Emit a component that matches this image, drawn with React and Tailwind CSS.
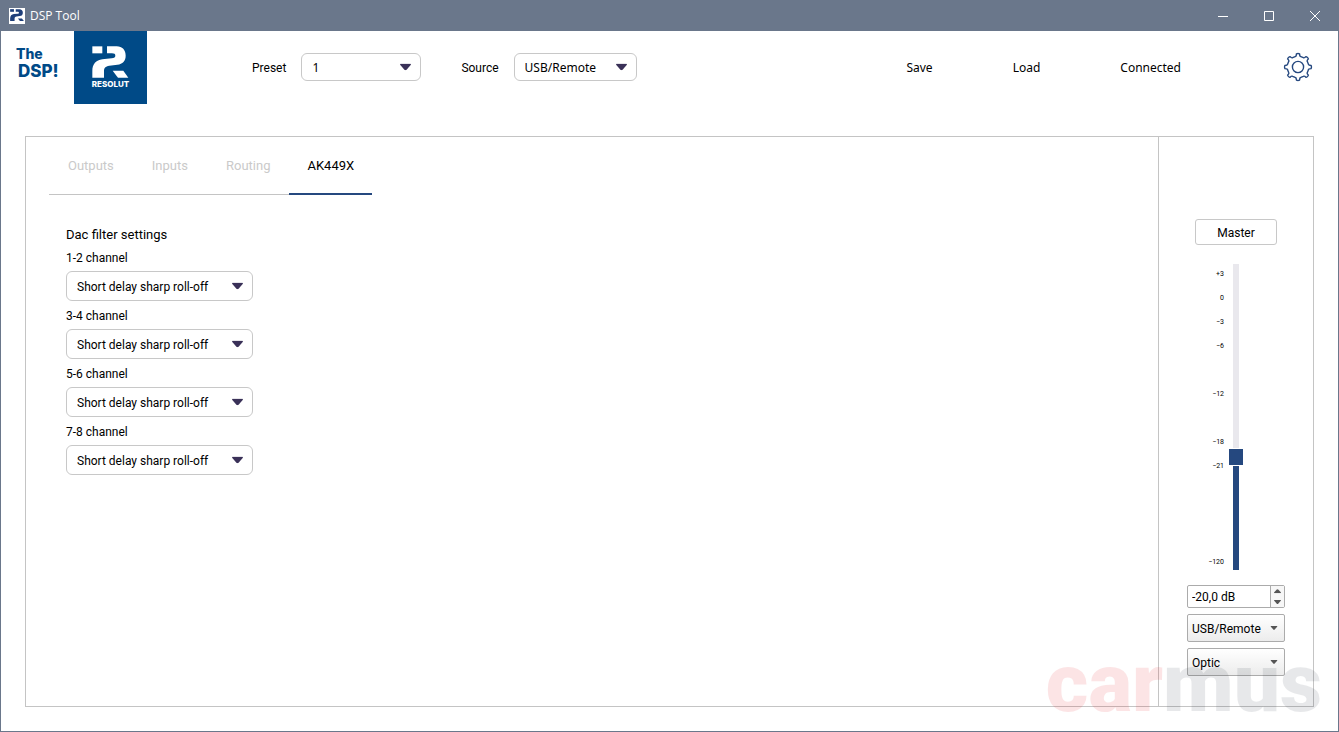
import { useState } from 'react'

const tabs = ['Outputs', 'Inputs', 'Routing', 'AK449X']

const channels = ['1-2 channel', '3-4 channel', '5-6 channel', '7-8 channel']

const filters = [
  'Short delay sharp roll-off',
  'Short delay slow roll-off',
  'Sharp roll-off',
  'Slow roll-off',
]

const scale = ['+3', '0', '−3', '−6', '', '−12', '', '−18', '−21', '', '', '', '−120']

const FADER_MIN = -33
const FADER_MAX = 3

const point = (deg, r) => {
  const a = (deg * Math.PI) / 180
  return `${(15 + r * Math.sin(a)).toFixed(2)} ${(15 - r * Math.cos(a)).toFixed(2)}`
}

const gearPath =
  [0, 45, 90, 135, 180, 225, 270, 315]
    .map(
      (t, i) =>
        `${i === 0 ? 'M' : 'L'}${point(t - 7, 13.2)} Q${point(t, 13.9)} ${point(t + 7, 13.2)} ` +
        `Q${point(t + 9, 10.6)} ${point(t + 15, 10.8)} L${point(t + 30, 10.8)} Q${point(t + 36, 10.6)} ${point(t + 38, 13.2)}`
    )
    .join(' ') + ' Z'

const LogoMark = ({ className }) => (
  <svg viewBox="0 0 110 96" fill="currentColor" className={className} aria-hidden="true">
    <path d="M1 1h30v21H1z" />
    <path d="M45 1h29c17 0 27 11 27 28 0 16-9 25-25 27l-24 3c-12 2-16 7-16 17v19H1V75c0-21 11-32 30-35l28-3c8-1 11-3 11-8 0-5-3-7-10-7H45z" />
    <path d="M62 74h32l15 21H78z" />
  </svg>
)

const Arrow = ({ className }) => (
  <svg viewBox="0 0 10 6" fill="currentColor" className={className} aria-hidden="true">
    <path d="M0.5 0h9q.8.4.2 1.2L6 5.4Q5 6.3 4 5.4L.3 1.2Q-.3.4.5 0z" />
  </svg>
)

const Select = ({ id, options, className }) => (
  <div className={`relative ${className}`}>
    <select
      id={id}
      className="h-full w-full appearance-none rounded-md border border-[#c8c8c8] bg-white pl-[10px] pr-7 pt-px text-black outline-none"
    >
      {options.map((option) => (
        <option key={option}>{option}</option>
      ))}
    </select>
    <Arrow className="pointer-events-none absolute right-[10px] top-1/2 h-[7px] w-[11px] -translate-y-1/2 text-[#3a3158]" />
  </div>
)

const NativeSelect = ({ options, label }) => (
  <div className="relative h-7 w-full">
    <select
      aria-label={label}
      className="h-full w-full appearance-none rounded-xs border border-[#ababab] bg-linear-to-b from-white to-[#ececec] pl-1 pt-px text-black outline-none"
    >
      {options.map((option) => (
        <option key={option}>{option}</option>
      ))}
    </select>
    <Arrow className="pointer-events-none absolute right-[7px] top-1/2 h-1 w-2 -translate-y-1/2 text-[#555]" />
  </div>
)

const TitleBar = () => (
  <div className="flex h-[31px] items-center bg-[#6a778b] pl-2 text-white">
    <span className="flex h-4 w-4 items-center justify-center bg-white text-[#1f3f7a]">
      <LogoMark className="w-[14px]" />
    </span>
    <h1 className="ml-[5px] font-['Open_Sans',sans-serif] text-xs">DSP Tool</h1>
    <div className="ml-auto flex">
      <button aria-label="Minimize" className="flex h-[30px] w-[46px] items-center justify-center">
        <svg viewBox="0 0 10 10" className="w-[10px]" stroke="currentColor">
          <path d="M0 5.5h10" />
        </svg>
      </button>
      <button aria-label="Maximize" className="flex h-[30px] w-[46px] items-center justify-center">
        <svg viewBox="0 0 10 10" className="w-[10px]" stroke="currentColor" fill="none">
          <path d="M.5.5h9v9h-9z" />
        </svg>
      </button>
      <button aria-label="Close" className="flex h-[30px] w-[46px] items-center justify-center">
        <svg viewBox="0 0 10 10" className="w-[10px]" stroke="currentColor">
          <path d="M0 0l10 10M10 0L0 10" />
        </svg>
      </button>
    </div>
  </div>
)

const Header = () => (
  <header className="flex h-[72px] items-center pl-[15px] pr-[25px]">
    <div className="w-[58px] pb-2 font-['Inter',sans-serif] font-extrabold text-[#004a87]">
      <p className="text-sm leading-4">The</p>
      <p className="pl-0.5 text-[17px] leading-[18px]">DSP!</p>
    </div>
    <div className="flex h-[73px] w-[73px] flex-col items-center self-start bg-[#004a87] pt-[15px] text-white">
      <LogoMark className="h-8" />
      <p className="font-['Inter',sans-serif] text-[8px] font-extrabold leading-3">RESOLUT</p>
    </div>

    <label htmlFor="preset" className="ml-[105px] pt-0.5">
      Preset
    </label>
    <Select
      id="preset"
      options={['1', '2', '3', '4']}
      className="ml-[15px] h-7 w-[120px] font-['Noto_Sans',sans-serif]"
    />
    <label htmlFor="source" className="ml-10 pt-0.5">
      Source
    </label>
    <Select
      id="source"
      options={['USB/Remote', 'Optic']}
      className="ml-[15px] h-7 w-[123px] font-['Noto_Sans',sans-serif]"
    />

    <div className="ml-auto flex items-center gap-20 pt-px font-['Noto_Sans',sans-serif]">
      <button>Save</button>
      <button>Load</button>
      <span>Connected</span>
    </div>
    <button aria-label="Settings" className="ml-[102px] text-[#25487f]">
      <svg viewBox="0 0 30 30" fill="none" stroke="currentColor" strokeWidth="1.4" strokeLinejoin="round" className="w-[30px]">
        <path d={gearPath} />
        <circle cx="15" cy="15" r="5.6" />
      </svg>
    </button>
  </header>
)

const MasterPanel = () => {
  const [level, setLevel] = useState(-20)
  const filled = ((level - FADER_MIN) / (FADER_MAX - FADER_MIN)) * 100

  return (
    <aside className="flex w-[155px] shrink-0 flex-col items-center border-l border-[#c4c4c4] pt-[82px]">
      <button className="h-[26px] w-[82px] rounded-[3px] border border-[#c8c8c8] pt-px">Master</button>

      <div className="mt-4 grid w-full grid-cols-[1fr_14px_1fr] items-center">
        <ul className="pr-[5px] text-right text-[7px]">
          {scale.map((mark, i) => (
            <li key={i} className="h-6 leading-[26px]">
              {mark}
            </li>
          ))}
        </ul>
        <input
          type="range"
          aria-label="Master volume"
          min={FADER_MIN}
          max={FADER_MAX}
          value={level}
          onChange={(e) => setLevel(Number(e.target.value))}
          style={{
            backgroundImage: `linear-gradient(to top, #25487f ${filled}%, #e9e8ed ${filled}%)`,
          }}
          className="h-[306px] w-[14px] appearance-none bg-[length:6px_100%] bg-center bg-no-repeat [direction:rtl] [writing-mode:vertical-lr] [&::-webkit-slider-thumb]:h-4 [&::-webkit-slider-thumb]:w-[14px] [&::-webkit-slider-thumb]:appearance-none [&::-webkit-slider-thumb]:rounded-none [&::-webkit-slider-thumb]:border-0 [&::-webkit-slider-thumb]:bg-[#25487f] [&::-webkit-slider-thumb]:[box-shadow:0_1px_white,0_-1px_white]"
        />
      </div>

      <div className="mt-3 flex w-[98px] flex-col gap-1.5">
        <div className="flex h-[23px] rounded-xs border border-[#ababab] bg-white">
          <input
            type="text"
            aria-label="Master level"
            value={`${level},0 dB`}
            readOnly
            className="min-w-0 flex-1 pl-1 outline-none"
          />
          <div className="flex w-[14px] flex-col border-l border-[#ababab] bg-[#f7f7f7] text-[#555]">
            <button
              aria-label="Level up"
              onClick={() => setLevel(Math.min(FADER_MAX, level + 1))}
              className="flex flex-1 items-center justify-center"
            >
              <Arrow className="w-[7px] rotate-180" />
            </button>
            <button
              aria-label="Level down"
              onClick={() => setLevel(Math.max(FADER_MIN, level - 1))}
              className="flex flex-1 items-center justify-center"
            >
              <Arrow className="w-[7px]" />
            </button>
          </div>
        </div>
        <NativeSelect label="Main input" options={['USB/Remote', 'Optic']} />
        <NativeSelect label="Second input" options={['Optic', 'USB/Remote']} />
      </div>
    </aside>
  )
}

const App = () => {
  const [activeTab, setActiveTab] = useState('AK449X')

  return (
    <div className="relative flex min-h-screen flex-col border border-t-0 border-[#6a778b] bg-white font-['Roboto',sans-serif] text-xs text-black">
      <TitleBar />
      <Header />

      <main className="mx-6 mb-6 mt-[33px] flex flex-1 border border-[#c4c4c4]">
        <section className="flex-1 px-[23px]">
          <nav className="flex h-[58px] w-fit text-[13px]">
            {tabs.map((tab) => (
              <button
                key={tab}
                onClick={() => setActiveTab(tab)}
                className={
                  tab === activeTab
                    ? 'border-b-2 border-[#25487f] px-[18px] pt-0.5'
                    : 'border-b border-[#c4c4c4] px-[19px] text-[#cacaca]'
                }
              >
                {tab}
              </button>
            ))}
          </nav>

          <div className="mt-8 pl-[17px]">
            <h2 className="text-[13px] leading-4">Dac filter settings</h2>
            {channels.map((channel, i) => (
              <div key={channel} className="w-[187px]">
                <label htmlFor={`filter-${i}`} className="block h-7 leading-[30px]">
                  {channel}
                </label>
                <Select id={`filter-${i}`} options={filters} className="h-[30px]" />
              </div>
            ))}
          </div>
        </section>

        <MasterPanel />
      </main>

      <p className="pointer-events-none absolute bottom-0 right-4 font-['Roboto',sans-serif] text-[82px] font-black leading-[96px] opacity-10">
        <span className="text-red-600">car</span>
        <span className="text-gray-800">mus</span>
      </p>
    </div>
  )
}

export default App
